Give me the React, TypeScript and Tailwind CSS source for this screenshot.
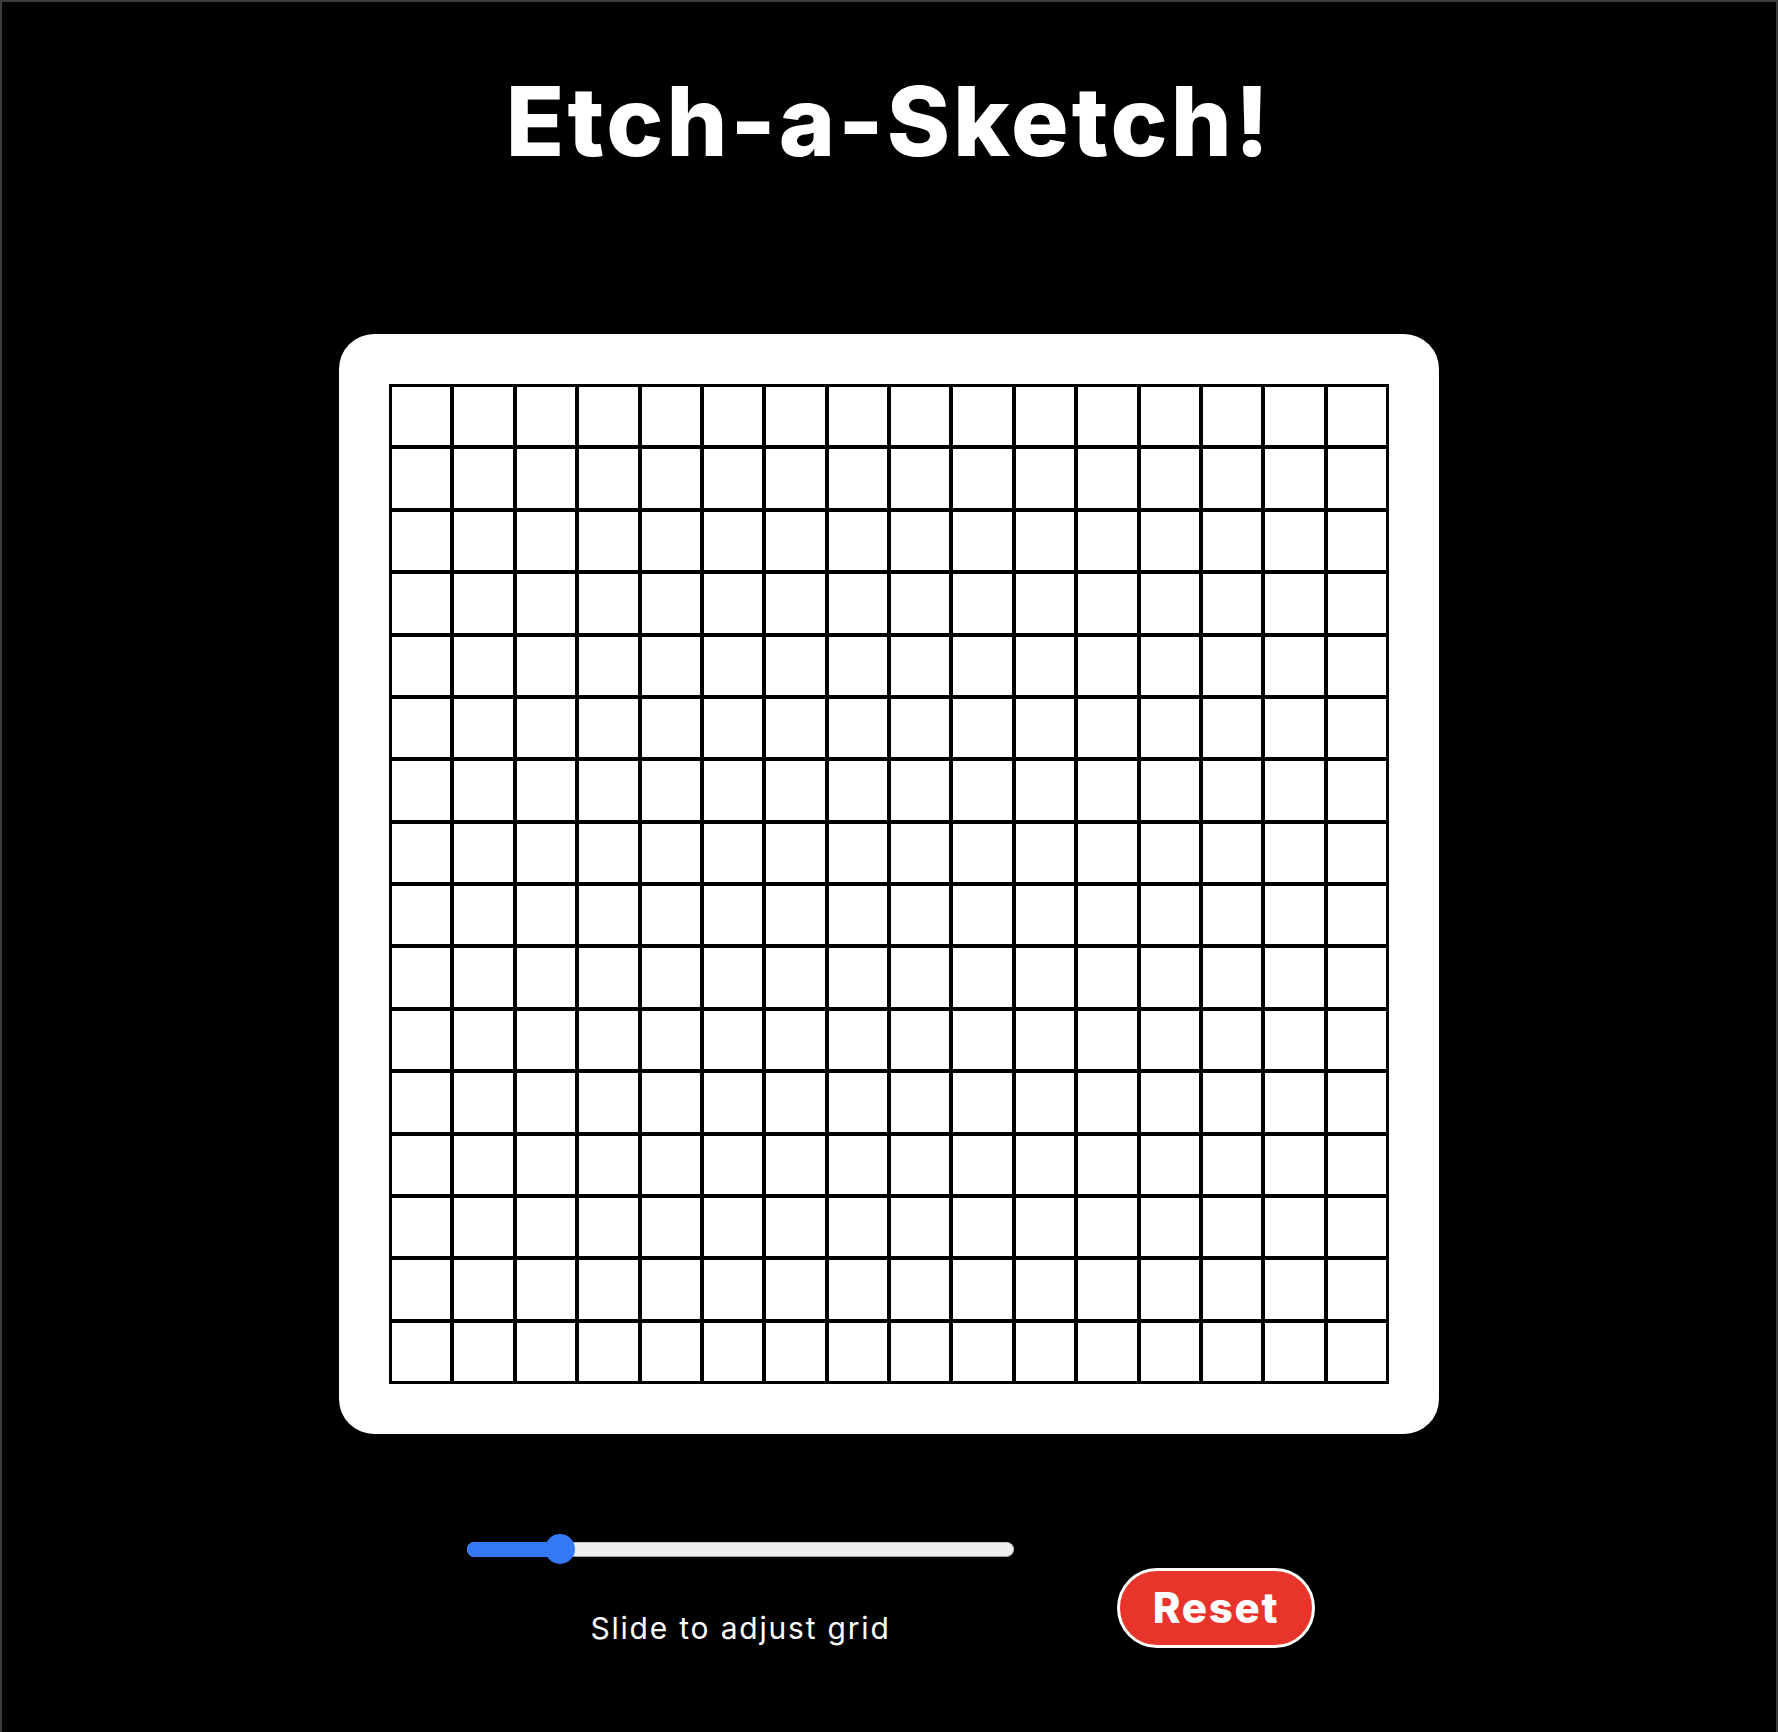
import React from "react";

const CELLS = Array.from({ length: 256 }, (_, i) => i);

export default function App() {
  return (
    <div
      className="w-[1778px] min-h-[1740px] bg-black border-2 border-[#3c3c3c] flex flex-col items-center"
      style={{ fontFamily: "Inter, 'Open Sans', sans-serif" }}
    >
      <h1 className="mt-[71px] text-[96px] leading-none font-extrabold text-white tracking-[0.032em]">
        Etch-a-Sketch!
      </h1>

      <div className="mt-[165px] w-[1100px] h-[1100px] p-[50px] bg-white rounded-[35px]">
        <div className="w-[1000px] h-[1000px] border border-black grid grid-cols-16 grid-rows-16">
          {CELLS.map((i) => (
            <div key={i} className="border-2 border-black bg-white" />
          ))}
        </div>
      </div>

      <div className="mt-[100px] pl-[4px] flex items-start gap-[103px]">
        <div className="w-[547px] flex flex-col items-center">
          <div className="relative w-[547px] h-[30px] flex items-center">
            <div className="w-full h-[15px] rounded-full bg-[#efefef] border border-[#c8c8c8] border-b-[#9a9a9a] flex">
              <div className="w-[93px] h-[15px] -mt-px -ml-px rounded-l-full bg-[#3478f6]" />
            </div>
            <div className="absolute left-[78px] top-0 w-[30px] h-[30px] rounded-full bg-[#3478f6]" />
          </div>
          <div className="mt-[49px] text-[30px] leading-none text-white tracking-[0.06em]">
            Slide to adjust grid
          </div>
        </div>
        <button className="mt-[34px] w-[198px] h-[80px] rounded-full border-[3px] border-white bg-[#e8342a] text-white text-[42px] leading-none font-extrabold tracking-[0.04em] flex items-center justify-center">
          Reset
        </button>
      </div>
    </div>
  );
}
